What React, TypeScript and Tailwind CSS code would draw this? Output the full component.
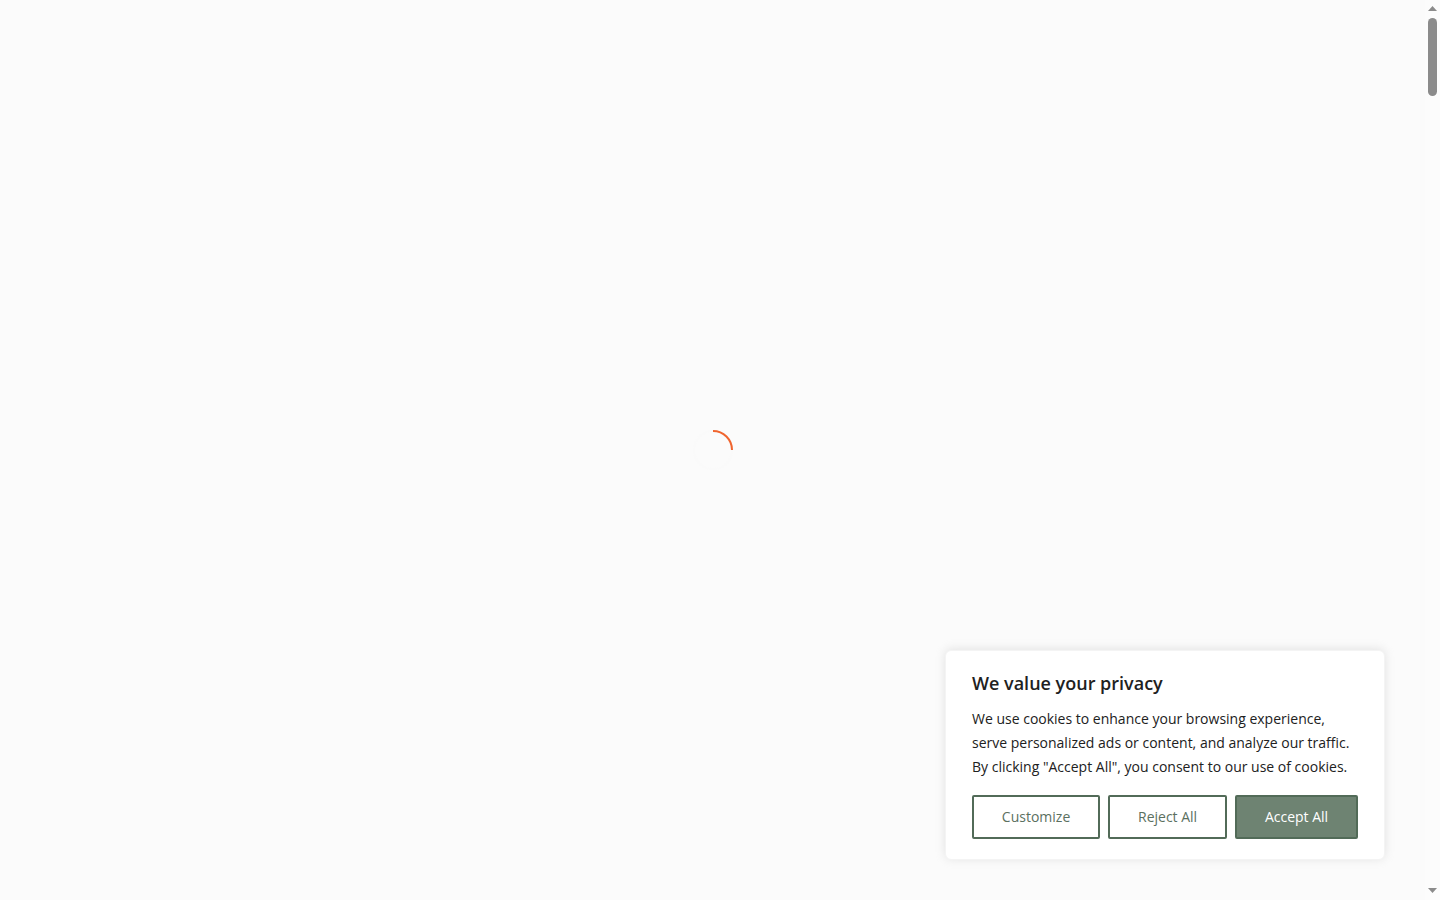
import { ReactNode, useState } from "react";

type ConsentButtonProps = {
  label: string;
  filled?: boolean;
  clickHandler: () => void;
}

const ConsentButton = ({ label, filled = false, clickHandler }: ConsentButtonProps): ReactNode => {
  return (
    <button
      type="button"
      onClick={clickHandler}
      className={
        filled
          ? "flex-auto rounded-xs border-2 border-[#526b58] bg-[#6e8372] px-6 py-2 text-sm leading-6 text-white cursor-pointer"
          : "flex-auto rounded-xs border-2 border-[#526b58] bg-white px-6 py-2 text-sm leading-6 text-[#5b705f] cursor-pointer"
      }
    >
      {label}
    </button>
  );
};

const CookieBanner = ({ onClose }: { onClose: () => void }): ReactNode => {
  return (
    <section
      aria-label="We value your privacy"
      className="absolute bottom-10 right-10 w-110 max-w-full rounded-md border border-[#f4f4f4] bg-white px-6.5 py-5 text-[#212121] shadow-[0_-1px_10px_0_#acabab4d]"
    >
      <h2 className="text-lg leading-6 font-semibold">We value your privacy</h2>
      <p className="mt-3 text-sm leading-6">
        We use cookies to enhance your browsing experience, serve personalized ads or content, and
        analyze our traffic. By clicking "Accept All", you consent to our use of cookies.
      </p>
      <div className="mt-4 flex gap-2">
        <ConsentButton label="Customize" clickHandler={onClose} />
        <ConsentButton label="Reject All" clickHandler={onClose} />
        <ConsentButton label="Accept All" filled clickHandler={onClose} />
      </div>
    </section>
  );
};

const Spinner = (): ReactNode => {
  return (
    <svg role="status" aria-label="Loading" width="40" height="40" viewBox="0 0 40 40" fill="none">
      <circle cx="20" cy="20" r="19" stroke="#fafafa" strokeWidth="2" />
      <path d="M20 1A19 19 0 0 1 39 20" stroke="#f0652f" strokeWidth="2" />
    </svg>
  );
};

const ScrollTrack = (): ReactNode => {
  return (
    <div aria-hidden="true" className="flex w-[15px] flex-col items-center justify-between bg-[#fcfcfc] pt-1.5 pb-[7px]">
      <div className="flex flex-col items-center gap-[7px]">
        <svg width="9" height="5" viewBox="0 0 9 5" fill="#8b8b8b">
          <path d="M4.5 0L9 5H0Z" />
        </svg>
        <div className="h-[78px] w-[9px] rounded-full bg-[#8b8b8b]" />
      </div>
      <svg width="9" height="5" viewBox="0 0 9 5" fill="#8b8b8b">
        <path d="M0 0H9L4.5 5Z" />
      </svg>
    </div>
  );
};

const App = (): ReactNode => {
  //useStates
  const [isBannerOpen, setIsBannerOpen] = useState<boolean>(true);

  return (
    <div className="flex min-h-screen bg-[#fbfbfb] font-['Open_Sans',sans-serif]">
      <main className="relative flex flex-1 items-center justify-center">
        <Spinner />
        {isBannerOpen && <CookieBanner onClose={() => setIsBannerOpen(false)} />}
      </main>
      <ScrollTrack />
    </div>
  );
};

export default App;
